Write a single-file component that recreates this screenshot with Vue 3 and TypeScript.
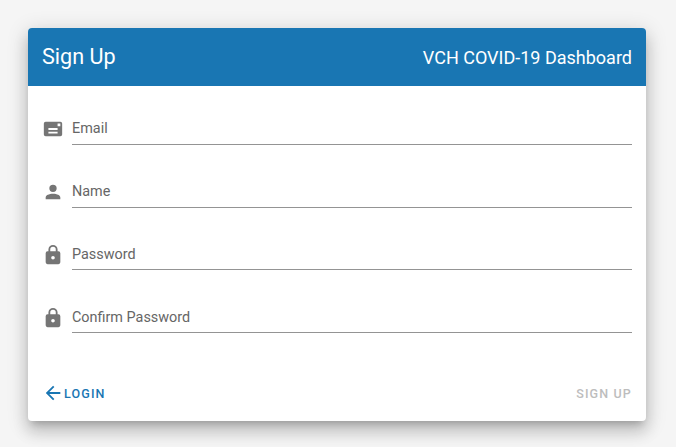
<script setup lang="ts">
interface Field { label: string; icon: string }
const lock = 'M12 17a2 2 0 0 0 2-2 2 2 0 0 0-2-2 2 2 0 0 0-2 2 2 2 0 0 0 2 2m6-9a2 2 0 0 1 2 2v10a2 2 0 0 1-2 2H6a2 2 0 0 1-2-2V10a2 2 0 0 1 2-2h1V6a5 5 0 0 1 5-5 5 5 0 0 1 5 5v2h1m-6-5a3 3 0 0 0-3 3v2h6V6a3 3 0 0 0-3-3Z'
const fields: Field[] = [
  { label: 'Email', icon: 'M4 4h16a2 2 0 0 1 2 2v12a2 2 0 0 1-2 2H4a2 2 0 0 1-2-2V6a2 2 0 0 1 2-2M17 6v3h3V6h-3M7 11v2h10v-2H7m0 4v2h10v-2H7Z' },
  { label: 'Name', icon: 'M12 4a4 4 0 0 1 4 4 4 4 0 0 1-4 4 4 4 0 0 1-4-4 4 4 0 0 1 4-4m0 10c4.42 0 8 1.79 8 4v2H4v-2c0-2.21 3.58-4 8-4Z' },
  { label: 'Password', icon: lock },
  { label: 'Confirm Password', icon: lock },
]
</script>

<template>
  <main class="page">
    <form class="card" @submit.prevent>
      <header class="toolbar">
        <h1>Sign Up</h1>
        <span class="product">VCH COVID-19 Dashboard</span>
      </header>
      <div class="fields">
        <label v-for="field in fields" :key="field.label" class="field">
          <svg class="icon" viewBox="0 0 24 24"><path :d="field.icon" fill-rule="evenodd" /></svg>
          <span class="line">{{ field.label }}</span>
        </label>
      </div>
      <footer class="actions">
        <button type="button" class="login">
          <svg class="arrow" viewBox="0 0 24 24"><path d="M20 11v2H8l5.5 5.5-1.42 1.42L4.16 12l7.92-7.92L13.5 5.5 8 11h12Z" /></svg>
          <span>LOGIN</span>
        </button>
        <button type="submit" class="submit" disabled>SIGN UP</button>
      </footer>
    </form>
  </main>
</template>

<style>
body { background: #f5f5f5; }
</style>

<style scoped>
.page { box-sizing: border-box; height: 447px; padding: 28px 30px 26px 28px; font-family: Roboto, sans-serif; background: #f5f5f5; }
.card { box-sizing: border-box; display: flex; flex-direction: column; height: 393px; border-radius: 4px; background: #fff; overflow: hidden; box-shadow: 0 6px 7px -4px rgba(0,0,0,.2), 0 11px 15px 1px rgba(0,0,0,.14), 0 4px 20px 3px rgba(0,0,0,.12); }
.toolbar { display: flex; align-items: center; justify-content: space-between; height: 58px; padding: 0 14px; background: #1976b3; color: #fff; }
h1 { margin: 0; font-size: 21.6px; font-weight: 400; line-height: 30px; }
.product { font-size: 18px; line-height: 26px; padding-top: 2px; }
.fields { display: flex; flex-direction: column; padding: 28.2px 14px 0; }
.field { display: flex; height: 62.8px; }
.icon { width: 22px; height: 22px; margin: 4px 8px 0 0; fill: #757575; }
.line { box-sizing: border-box; flex: 1; height: 30.6px; padding-top: 5px; border-bottom: 1px solid #949494; color: #666; font-size: 14.4px; line-height: 20px; }
.actions { display: flex; align-items: center; justify-content: space-between; margin-top: auto; padding: 0 14px; height: 55px; }
button { display: flex; align-items: center; padding: 0; border: 0; background: none; font: 500 12.5px/20px Roboto, sans-serif; letter-spacing: 1.15px; }
.login { color: #1976b3; }
.arrow { width: 22px; height: 22px; margin-bottom: 2px; fill: currentColor; }
.submit { color: #bdbdbd; }
</style>
